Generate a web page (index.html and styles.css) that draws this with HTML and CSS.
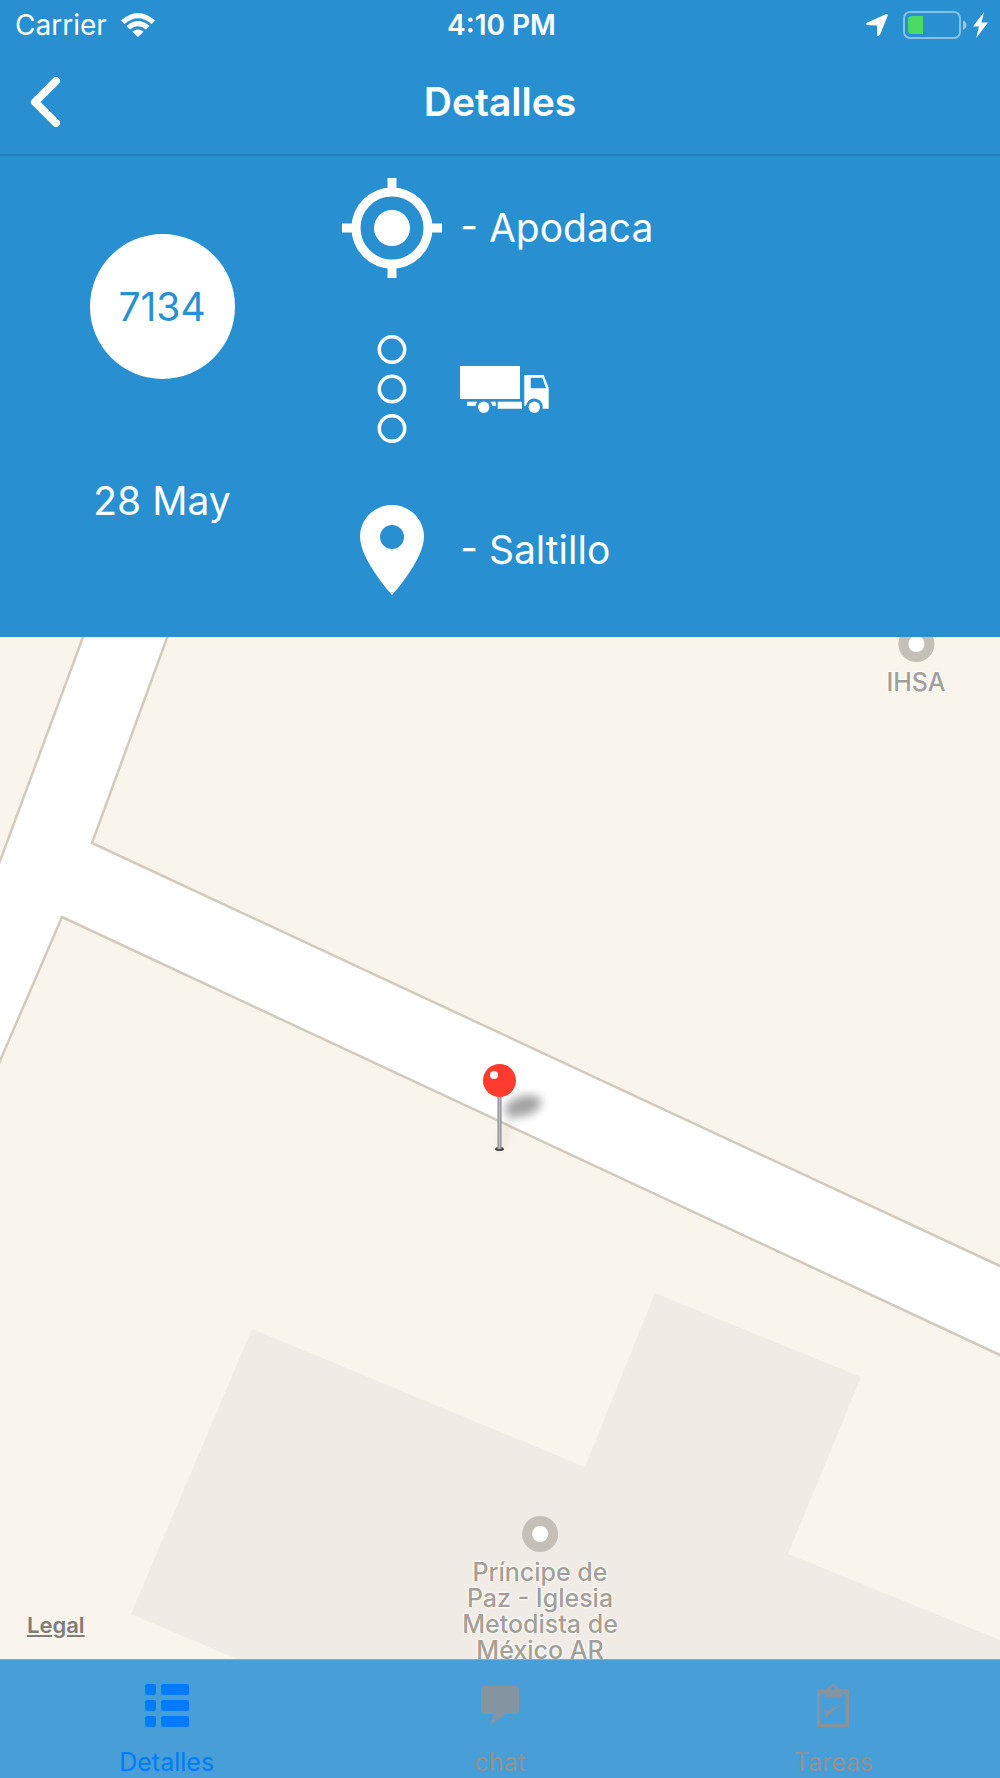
FILE: index.html
```html
<!DOCTYPE html>
<html lang="es">
<head>
  <meta charset="UTF-8" />
  <meta name="viewport" content="width=device-width, initial-scale=1.0"/>
  <title>Detalles</title>
  <link rel="stylesheet" href="styles.css">
</head>
<body>

  <!-- Barra de estado -->
  <div class="status-bar">
    <div class="status-left">
      <span>Carrier</span>
      <svg class="wifi" width="34" height="24" viewBox="0 0 34 24">
        <path d="M0 7.500Q17 -7.500 34 7.500L30.500 11Q17 -.500 3.500 11Z"/>
        <path d="M5.500 13Q17 3 28.500 13L25 16.500Q17 10 9 16.500Z"/>
        <path d="M11.500 18.800Q17 14.200 22.500 18.800L17 24Z"/>
      </svg>
    </div>
    <span class="status-time">4:10 PM</span>
    <div class="status-right">
      <svg class="arrow" width="22" height="22" viewBox="0 0 22 22">
        <path d="M20.300 0Q22.200 0 21.700 1.700L14 20.700Q13 22.500 11.300 21.500L11 11.500 .8 11Q-.6 9.800 1 8.800Z"/>
      </svg>
      <svg class="battery" width="64" height="28" viewBox="0 0 64 28">
        <rect class="battery-case" x="1" y="1" width="56" height="26" rx="6"/>
        <path class="battery-tip" d="M60 9.500Q63.500 11 63.500 14T60 19Z"/>
        <path class="battery-level" d="M20 5V23H8.500Q5 23 5 19.500V8.500Q5 5 8.500 5Z"/>
      </svg>
      <svg width="15" height="26" viewBox="0 0 15 26">
        <path d="M11 0L0 14.500H6L3.200 26 15 10.500H8.500Z"/>
      </svg>
    </div>
  </div>

  <!-- Barra de navegación -->
  <header class="nav-bar">
    <button class="back-button" type="button" aria-label="Volver">
      <svg width="30" height="50" viewBox="0 0 30 50">
        <path d="M26 4L5 25 26 46"/>
      </svg>
    </button>
    <h1>Detalles</h1>
  </header>

  <!-- Resumen del viaje -->
  <section class="trip">
    <div class="trip-info">
      <div class="trip-number">7134</div>
      <p>28 May</p>
    </div>
    <div class="route">
      <div class="route-row">
        <div class="route-icon">
          <svg width="100" height="100" viewBox="0 0 100 100">
            <circle cx="50" cy="50" r="36" fill="none" stroke="#fff" stroke-width="9"/>
            <circle cx="50" cy="50" r="18"/>
            <path d="M45.500 0H54.500V12H45.500ZM45.500 88H54.500V100H45.500ZM0 45.500H12V54.500H0ZM88 45.500H100V54.500H88Z"/>
          </svg>
        </div>
        <p>- Apodaca</p>
      </div>
      <div class="route-row">
        <div class="route-icon">
          <svg class="dots" width="30" height="108" viewBox="0 0 30 108">
            <circle cx="15" cy="14.500" r="12.700"/>
            <circle cx="15" cy="54" r="12.700"/>
            <circle cx="15" cy="93.500" r="12.700"/>
          </svg>
        </div>
        <svg class="truck" width="89" height="47" viewBox="0 0 89 47">
          <path d="M0 0H60V33H0Z"/>
          <path fill-rule="evenodd" d="M64.300 9H83.700L88.700 22V42.700H82.700A8.500 8.500 0 0 0 66 39.500L65.800 40H64.300ZM70.700 11.700V22.300H86L82.300 11.700Z"/>
          <path d="M7 35.700H17.300Q16 37 15.500 40H7ZM30 35.700H35.700V40H32.500Q31.500 37 30 35.700ZM37.700 35.700H62V42.700H37.700Z"/>
          <circle cx="23.700" cy="41.300" r="5.700"/>
          <circle cx="74.300" cy="41.300" r="5.700"/>
        </svg>
      </div>
      <div class="route-row">
        <div class="route-icon">
          <svg width="64" height="90" viewBox="0 0 64 90">
            <path fill-rule="evenodd" d="M32 0C14.300 0 0 14.100 0 31.500 0 55 32 90 32 90S64 55 64 31.500C64 14.100 49.700 0 32 0ZM32 20A12 12 0 1 1 32 44 12 12 0 1 1 32 20Z"/>
          </svg>
        </div>
        <p>- Saltillo</p>
      </div>
    </div>
  </section>

  <!-- Mapa -->
  <main class="map">
    <svg class="map-canvas" viewBox="0 0 1000 1022" preserveAspectRatio="xMidYMid slice">
      <defs>
        <filter id="blur" x="-50%" y="-80%" width="200%" height="260%">
          <feGaussianBlur stdDeviation="5"/>
        </filter>
        <linearGradient id="needle">
          <stop offset="0" stop-color="#85888b"/>
          <stop offset=".5" stop-color="#b5b9bd"/>
          <stop offset="1" stop-color="#808386"/>
        </linearGradient>
      </defs>
      <rect width="1000" height="1022" fill="#fff"/>
      <!-- manzanas -->
      <g class="block">
        <path d="M-10 -10H87L83 0 0 224 -10 251Z"/>
        <path d="M171 -10L92 206 1000 629 1010 634V-10Z"/>
        <path d="M62 280L1000 718 1010 723V1032H-10V447L0 424Z"/>
      </g>
      <path class="building" d="M252 692L585 830 655 656 861 740 788 917 1000 1003V1022H237L131 977Z"/>
      <!-- alfiler -->
      <ellipse cx="523" cy="469" rx="19" ry="10" fill="#000" opacity=".36" transform="rotate(-16 523 469)" filter="url(#blur)"/>
      <path d="M500 512L512 478" stroke="#000" stroke-width="8" opacity=".06" filter="url(#blur)"/>
      <ellipse cx="499.500" cy="512" rx="4.500" ry="2" fill="#4a4a48"/>
      <rect x="497.500" y="456" width="4" height="56" fill="url(#needle)"/>
      <circle cx="499.500" cy="443.500" r="16.500" fill="#ff3b30"/>
      <circle cx="494" cy="438" r="4" fill="#fff"/>
    </svg>
    <div class="place place-ihsa">
      <span class="place-dot"></span>
      <span>IHSA</span>
    </div>
    <div class="place place-iglesia">
      <span class="place-dot"></span>
      <span>Príncipe de<br>Paz - Iglesia<br>Metodista de<br>México AR</span>
    </div>
    <a href="#" class="legal">Legal</a>
  </main>

  <!-- Pestañas -->
  <nav class="tab-bar">
    <a href="#" class="tab active">
      <svg width="44" height="44" viewBox="0 0 44 44">
        <rect width="11" height="11" rx="2"/><rect x="16" width="28" height="11" rx="2"/>
        <rect y="16" width="11" height="11" rx="2"/><rect x="16" y="16" width="28" height="11" rx="2"/>
        <rect y="32" width="11" height="11" rx="2"/><rect x="16" y="32" width="28" height="11" rx="2"/>
      </svg>
      <span>Detalles</span>
    </a>
    <a href="#" class="tab">
      <svg width="38" height="44" viewBox="0 0 38 44">
        <path d="M4 2H34Q38 2 38 6V26Q38 30 34 30H25.500L9 41 12.500 30H4Q0 30 0 26V6Q0 2 4 2Z"/>
      </svg>
      <span>chat</span>
    </a>
    <a href="#" class="tab">
      <svg width="32" height="44" viewBox="0 0 32 44">
        <path fill-rule="evenodd" d="M0 5.500H8Q9 4 12 3.500 12.500 0 16 0T20 3.500Q23 4 24 5.500H32V43H0ZM3.500 10V40H28.500V10H24.500V13.500H7.500V10ZM16 2.200A2 2 0 1 0 16 6.200 2 2 0 1 0 16 2.200Z"/>
        <path d="M6.500 24L10.500 27.500Q17 22.500 25 20.500 16 25.500 9.500 34Z"/>
      </svg>
      <span>Tareas</span>
    </a>
  </nav>

</body>
</html>
```

FILE: styles.css
```css
* {
  margin: 0;
  padding: 0;
  box-sizing: border-box;
}

body {
  min-height: 100vh;
  display: flex;
  flex-direction: column;
  background: #288fd0;
  font-family: Inter, "Liberation Sans", sans-serif;
  color: #fff;
}

svg {
  display: block;
  flex: none;
  fill: #fff;
}

/* Barra de estado */
.status-bar {
  display: grid;
  grid-template-columns: 1fr auto 1fr;
  align-items: center;
  height: 50px;
  padding: 0 12px 0 15px;
  font-size: 28px;
}

.status-left,
.status-right {
  display: flex;
  align-items: center;
}

.status-left {
  gap: 14px;
}

.status-right {
  justify-content: flex-end;
}

.status-time {
  font-weight: 600;
}

.arrow {
  margin-right: 15px;
}

.battery {
  margin-right: 6px;
}

.battery-case {
  fill: none;
  stroke: #fff;
  stroke-width: 2;
  opacity: 0.45;
}

.battery-tip {
  opacity: 0.5;
}

.battery-level {
  fill: #4cd964;
}

/* Barra de navegación */
.nav-bar {
  display: grid;
  grid-template-columns: 1fr auto 1fr;
  align-items: center;
  height: 106px;
  padding: 0 30px;
  border-bottom: 2px solid #2480bb;
}

.nav-bar h1 {
  font-size: 39px;
  font-weight: 600;
  line-height: 48px;
}

.back-button {
  justify-self: start;
  background: none;
  border: none;
  cursor: pointer;
}

.back-button path {
  fill: none;
  stroke: #fff;
  stroke-width: 8;
  stroke-linecap: round;
  stroke-linejoin: round;
}

/* Resumen del viaje */
.trip {
  display: flex;
  padding: 22px 0 37px;
  font-size: 39px;
  line-height: 48px;
}

.trip-info {
  display: flex;
  flex-direction: column;
  align-items: center;
  gap: 98px;
  width: 32.4%;
  padding-top: 56px;
}

.trip-number {
  display: flex;
  align-items: center;
  justify-content: center;
  width: 145px;
  height: 145px;
  border-radius: 50%;
  background: #fff;
  color: #288fd0;
}

.route {
  flex: 1;
  display: flex;
  flex-direction: column;
  gap: 57px;
  padding-left: 18px;
}

.route-row {
  display: flex;
  align-items: center;
  gap: 18px;
  min-height: 100px;
}

.route-icon {
  display: flex;
  justify-content: center;
  width: 100px;
}

.dots {
  fill: none;
  stroke: #fff;
  stroke-width: 3.5;
}

/* Mapa */
.map {
  flex: 1;
  min-height: 400px;
  position: relative;
  overflow: hidden;
  background: #f9f4ec;
}

.map-canvas {
  position: absolute;
  width: 100%;
  height: 100%;
}

.block {
  fill: #f9f4ec;
  stroke: #d3cabe;
  stroke-width: 2.5;
}

.building {
  fill: #f0ebe4;
}

/* Lugares sobre el mapa */
.place {
  position: absolute;
  transform: translateX(-50%);
  display: flex;
  flex-direction: column;
  align-items: center;
  gap: 7px;
  font-size: 25px;
  font-weight: 500;
  line-height: 26px;
  text-align: center;
  white-space: nowrap;
  color: #a39f98;
  text-shadow: 0 0 2px #fff, 0 0 3px #fff, 0 0 3px #fff;
}

.place-ihsa {
  left: 91.6%;
  top: -11px;
}

.place-iglesia {
  left: 54%;
  bottom: -4px;
}

.place-dot {
  width: 36px;
  height: 36px;
  border: 10px solid #c4c0b8;
  border-radius: 50%;
  background: #fff;
}

.legal {
  position: absolute;
  left: 27px;
  bottom: 21px;
  font-size: 22px;
  font-weight: 600;
  line-height: 26px;
  color: #807d79;
}

/* Pestañas */
.tab-bar {
  display: flex;
  height: 119px;
  border-top: 1px solid #a5a5a0;
  background: #489ed6;
  overflow: hidden;
}

.tab {
  flex: 1;
  display: flex;
  flex-direction: column;
  align-items: center;
  gap: 20px;
  padding-top: 24px;
  font-size: 25px;
  line-height: 28px;
  color: #929292;
  text-decoration: none;
}

.tab svg {
  fill: #8494a0;
}

.tab.active {
  color: #007aff;
}

.tab.active svg {
  fill: #007aff;
}
```
